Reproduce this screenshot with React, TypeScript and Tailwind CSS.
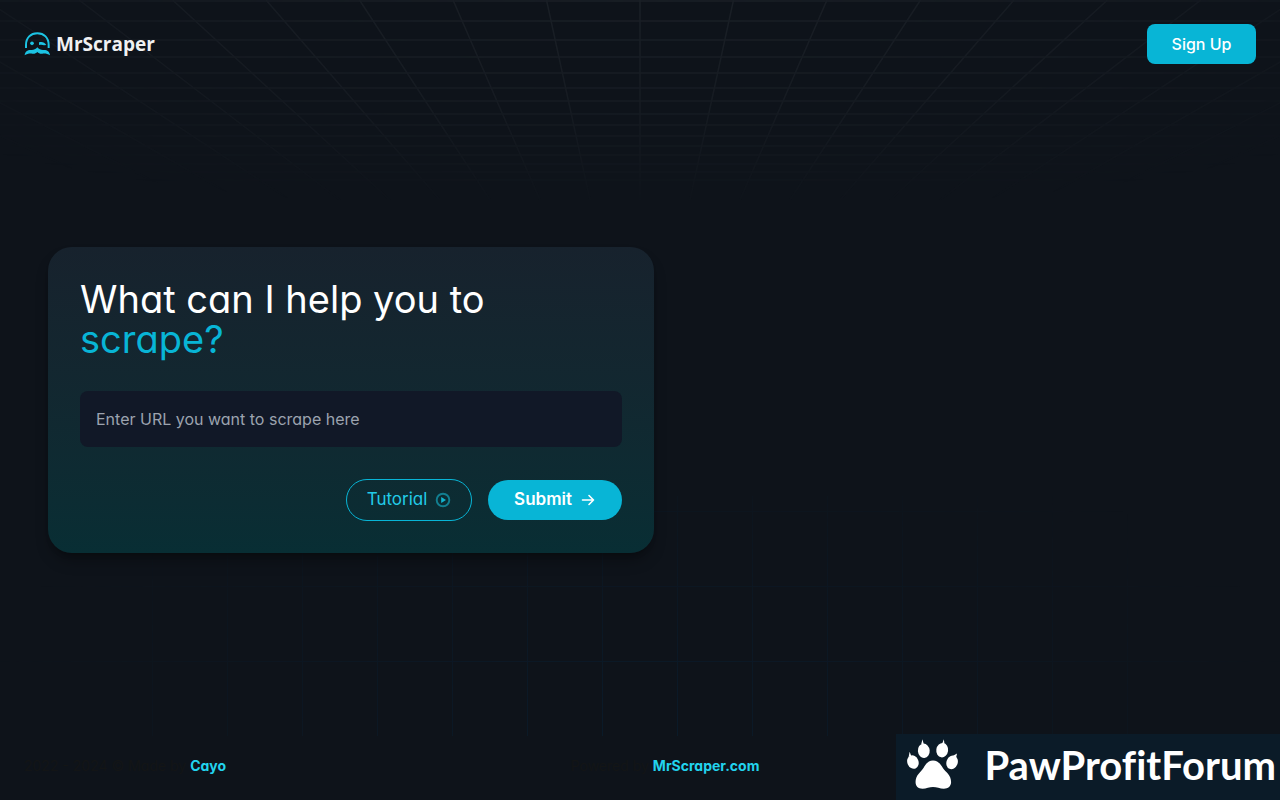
import React from "react";

const HORIZON_ROWS = [1, 21, 40, 57, 73, 88, 101, 114, 125, 136, 146, 155, 164, 172, 180];
const RAYS = [-12, -11, -10, -9, -8, -7, -6, -5, -4, -3, -2, -1, 0, 1, 2, 3, 4, 5, 6, 7, 8, 9, 10, 11, 12];
const FLOOR_COLUMNS = [152, 227, 302, 377, 452, 527, 602, 677, 752, 827, 902, 977, 1052, 1127];

function CeilingGrid() {
  return (
    <svg
      aria-hidden="true"
      viewBox="0 0 1280 200"
      preserveAspectRatio="xMidYMin slice"
      className="pointer-events-none absolute inset-x-0 top-0 h-[200px] w-full"
    >
      <defs>
        <radialGradient id="ceilingFade" gradientUnits="userSpaceOnUse" cx="0" cy="0" r="1" gradientTransform="translate(640 0) scale(920 215)">
          <stop offset="0" stopColor="#fff" stopOpacity="1" />
          <stop offset="0.5" stopColor="#fff" stopOpacity="0.65" />
          <stop offset="1" stopColor="#fff" stopOpacity="0" />
        </radialGradient>
        <mask id="ceilingMask" maskUnits="userSpaceOnUse" x="0" y="0" width="1280" height="200">
          <rect width="1280" height="200" fill="url(#ceilingFade)" />
        </mask>
      </defs>
      <g mask="url(#ceilingMask)" stroke="#1b2027" strokeWidth="1.5">
        {HORIZON_ROWS.map((y) => (
          <line key={y} x1="0" x2="1280" y1={y} y2={y} />
        ))}
        {RAYS.map((k) => (
          <line key={k} x1={640 + k * 93.5} y1="0" x2={640 + k * 50} y2="200" />
        ))}
      </g>
    </svg>
  );
}

function FloorGrid() {
  return (
    <svg
      aria-hidden="true"
      viewBox="0 0 1280 240"
      preserveAspectRatio="xMidYMax slice"
      className="pointer-events-none absolute inset-x-0 bottom-16 h-[240px] w-full"
    >
      <defs>
        <radialGradient id="floorFade" gradientUnits="userSpaceOnUse" cx="0" cy="0" r="1" gradientTransform="translate(640 240) scale(680 320)">
          <stop offset="0" stopColor="#fff" stopOpacity="1" />
          <stop offset="1" stopColor="#fff" stopOpacity="0" />
        </radialGradient>
        <mask id="floorMask" maskUnits="userSpaceOnUse" x="0" y="0" width="1280" height="240">
          <rect width="1280" height="240" fill="url(#floorFade)" />
        </mask>
      </defs>
      <g mask="url(#floorMask)" stroke="#0b1b2a" strokeWidth="1">
        {FLOOR_COLUMNS.map((x) => (
          <line key={x} x1={x + 0.5} x2={x + 0.5} y1="0" y2="240" />
        ))}
        {[16, 91, 166].map((y) => (
          <line key={y} x1="0" x2="1280" y1={y - 0.5} y2={y - 0.5} />
        ))}
      </g>
    </svg>
  );
}

function Logo() {
  return (
    <a href="#" className="flex items-center gap-1.5">
      <svg viewBox="-2 0 78 72" className="h-6 w-[26px]" fill="none" aria-hidden="true">
        <path d="M4 48V39C4 17 18 4 38 4s34 13 34 35v9" stroke="#1cc4e4" strokeWidth="6" />
        <circle cx="22" cy="34" r="5.5" fill="#1cc4e4" />
        <path d="M43 31c8-3 17-1 22 8l-7 1c-4-2-9-2-15-1z" fill="#1cc4e4" />
        <path d="M0 70c1-13 10-17 21-16 7 0 12-2 17-8 5 6 10 8 17 8 11-1 20 3 21 16-7-5-15-6-23-5-6 1-11-1-15-5-4 4-9 6-15 5-8-1-16 0-23 5z" fill="#1cc4e4" />
      </svg>
      <span className="font-['Open_Sans'] text-[19px] leading-6 font-bold text-[#f0f1f2]">MrScraper</span>
    </a>
  );
}

function Paw() {
  return (
    <svg viewBox="78 42 162 158" className="h-[52px] w-[54px] shrink-0" fill="#fff" aria-hidden="true">
      <ellipse cx="98" cy="112" rx="17" ry="21" transform="rotate(-22 98 112)" />
      <ellipse cx="131" cy="78" rx="18" ry="22" transform="rotate(-5 131 78)" />
      <ellipse cx="187" cy="76" rx="18" ry="22" transform="rotate(8 187 76)" />
      <ellipse cx="217" cy="113" rx="17" ry="21" transform="rotate(22 217 113)" />
      <path d="M85 97l3-16 5 13zM123 59l4-16 4 15zM187 56l5-13 2 15zM220 93l12-7-3 14z" />
      <path d="M159 107c15 0 23 11 30 23 8 13 25 20 25 43 0 13-9 20-22 20-12 0-22-5-33-5s-20 5-32 5c-13 0-21-7-21-20 0-22 16-30 24-43 7-12 14-23 29-23z" />
    </svg>
  );
}

export default function App() {
  return (
    <div className="relative flex min-h-screen flex-col overflow-hidden bg-[#0e131a] font-[Inter,sans-serif] [font-feature-settings:'cv11']">
      <CeilingGrid />
      <FloorGrid />

      <header className="relative flex items-center justify-between p-6">
        <Logo />
        <button type="button" className="h-10 w-[109px] rounded-lg bg-[#08b5d6] text-base font-medium text-white">
          Sign Up
        </button>
      </header>

      <main className="relative flex flex-1 items-center px-12 pb-5">
        <form
          onSubmit={(e) => e.preventDefault()}
          className="flex w-[606px] max-w-full flex-col gap-8 rounded-3xl bg-linear-to-b from-[#17222d] to-[#082e34] p-8 shadow-lg shadow-black/30"
        >
          <h1 className="text-[38px] leading-10 text-white">
            What can I help you to
            <br />
            <span className="text-[#08b5d6]">scrape?</span>
          </h1>
          <input
            type="url"
            aria-label="URL to scrape"
            placeholder="Enter URL you want to scrape here"
            className="h-14 w-full rounded-lg bg-[#111827] px-4 text-base text-white outline-none placeholder:text-[#9ca3af]"
          />
          <div className="flex items-center justify-end gap-4">
            <button
              type="button"
              className="flex h-[42px] w-[126px] items-center justify-center gap-2 rounded-full border border-[#08b5d6] text-[17px] text-[#22cbe8]"
            >
              Tutorial
              <svg viewBox="0 0 16 16" className="size-4" aria-hidden="true">
                <circle cx="8" cy="8" r="6.3" fill="none" stroke="#127f91" strokeWidth="1.9" />
                <path d="M6.2 5v6l4.8-3z" fill="#12b5d0" />
              </svg>
            </button>
            <button
              type="submit"
              className="flex h-10 w-[134px] items-center justify-center gap-2 rounded-full bg-[#08b5d6] text-[17px] font-semibold text-white"
            >
              Submit
              <svg viewBox="0 0 16 16" className="size-4" fill="none" stroke="currentColor" strokeWidth="1.6" strokeLinecap="round" strokeLinejoin="round" aria-hidden="true">
                <path d="M2.5 8h11M9 3.5L13.5 8 9 12.5" />
              </svg>
            </button>
          </div>
        </form>
      </main>

      <footer className="relative flex h-[68px] items-center justify-between px-6 text-sm text-[#131516]">
        <p>
          2022 - 2024 © Made by{" "}
          <a href="#" className="font-bold text-[#22d3ee]">Cayo</a>
        </p>
        <p>
          Powered by{" "}
          <a href="#" className="font-bold text-[#22d3ee]">MrScraper.com</a>
        </p>
        <div className="w-[152px]" />
      </footer>

      <div className="absolute right-0 bottom-0 flex h-[66px] w-96 items-center justify-between bg-[#0b1b28] pr-1 pb-1 pl-2.5">
        <Paw />
        <span className="font-[Lato] text-[40px] leading-none font-bold text-white [font-variant-ligatures:none]">PawProfitForum</span>
      </div>
    </div>
  );
}
